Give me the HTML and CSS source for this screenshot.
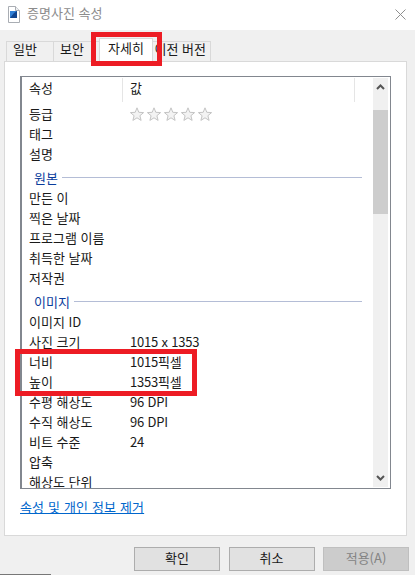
FILE: index.html
```html
<!DOCTYPE html>
<html lang="ko">
<head>
<meta charset="utf-8">
<title>증명사진 속성</title>
<link rel="stylesheet" href="styles.css">
</head>
<body>
<div class="window">
  <header class="titlebar">
    <svg class="file-icon" width="13" height="17" viewBox="0 0 13 17">
      <path d="M1.5 .5H8.5L12.5 4.5V16.5H1.5Z" fill="#fff" stroke="#a9adb3"/>
      <path d="M8.5 .5V4.5H12.5" fill="#eef0f2" stroke="#a9adb3"/>
      <rect x="3" y="5" width="7" height="7" fill="#2f7fd6"/>
      <path d="M3 12L7 7L10 5V12Z" fill="#10448f"/>
    </svg>
    <span class="title">증명사진 속성</span>
    <svg class="close" width="11" height="11" viewBox="0 0 11 11">
      <path d="M.5 .5L10.5 10.5M10.5 .5L.5 10.5" stroke="#8f8f8f" fill="none"/>
    </svg>
  </header>

  <main class="body">
    <nav class="tabs">
      <span class="tab tab-1">일반</span>
      <span class="tab tab-2">보안</span>
      <span class="tab tab-active">자세히</span>
      <span class="tab tab-4">이전 버전</span>
    </nav>

    <section class="panel">
      <div class="list">
        <div class="list-main">
          <div class="list-head">
            <span class="head-cell head-name">속성</span>
            <span class="head-cell head-value">값</span>
          </div>
          <div class="row">
            <span class="name">등급</span>
            <svg class="stars" width="83" height="15" viewBox="0 0 83 15">
              <defs>
                <polygon id="star" points="7,.8 8.8,5.3 13.6,5.6 9.9,8.7 11.1,13.4 7,10.8 2.9,13.4 4.1,8.7 .4,5.6 5.2,5.3" fill="#f3f3f3" stroke="#c4c4c4"/>
              </defs>
              <use href="#star" x="0"/>
              <use href="#star" x="17"/>
              <use href="#star" x="34"/>
              <use href="#star" x="51"/>
              <use href="#star" x="68"/>
            </svg>
          </div>
          <div class="row"><span class="name">태그</span></div>
          <div class="row"><span class="name">설명</span></div>
          <div class="group"><span class="group-label">원본</span><span class="group-line"></span></div>
          <div class="row"><span class="name">만든 이</span></div>
          <div class="row"><span class="name">찍은 날짜</span></div>
          <div class="row"><span class="name">프로그램 이름</span></div>
          <div class="row"><span class="name">취득한 날짜</span></div>
          <div class="row"><span class="name">저작권</span></div>
          <div class="group"><span class="group-label">이미지</span><span class="group-line"></span></div>
          <div class="row"><span class="name">이미지 ID</span></div>
          <div class="row"><span class="name">사진 크기</span><span class="value">1015 x 1353</span></div>
          <div class="row"><span class="name">너비</span><span class="value">1015픽셀</span></div>
          <div class="row"><span class="name">높이</span><span class="value">1353픽셀</span></div>
          <div class="row"><span class="name">수평 해상도</span><span class="value">96 DPI</span></div>
          <div class="row"><span class="name">수직 해상도</span><span class="value">96 DPI</span></div>
          <div class="row"><span class="name">비트 수준</span><span class="value">24</span></div>
          <div class="row"><span class="name">압축</span></div>
          <div class="row"><span class="name">해상도 단위</span></div>
        </div>
        <div class="scrollbar">
          <svg class="arrow" width="9" height="6" viewBox="0 0 9 6"><path d="M1 5L4.5 1.5L8 5" fill="none" stroke="#555" stroke-width="2"/></svg>
          <div class="track"><div class="thumb"></div></div>
          <svg class="arrow" width="9" height="6" viewBox="0 0 9 6"><path d="M1 1L4.5 4.5L8 1" fill="none" stroke="#555" stroke-width="2"/></svg>
        </div>
      </div>
      <a class="link" href="#">속성 및 개인 정보 제거</a>
    </section>

    <footer class="buttons">
      <button class="btn" type="button">확인</button>
      <button class="btn" type="button">취소</button>
      <button class="btn btn-disabled" type="button">적용(A)</button>
    </footer>
  </main>

  <div class="mark mark-tab"></div>
  <div class="mark mark-rows"></div>
  <div class="edge"></div>
</div>
</body>
</html>
```

FILE: styles.css
```css
* { box-sizing: border-box; }

html, body {
  margin: 0;
  padding: 0;
}

body {
  font-family: "Noto Sans CJK KR", "Noto Sans", sans-serif;
  font-size: 13px;
  color: #1a1a1a;
  background: #f0f0f0;
}

.window {
  position: relative;
  width: 415px;
  height: 575px;
  overflow: hidden;
  display: flex;
  flex-direction: column;
}

.titlebar {
  height: 30px;
  flex: none;
  background: #fff;
  display: flex;
  align-items: center;
  padding: 0 9px 2px 7px;
}

.file-icon { flex: none; }

.title {
  margin-left: 7px;
  margin-bottom: 2px;
  color: #8c8c8c;
  line-height: 24px;
}

.close { margin-left: auto; }

.body {
  flex: 1;
  display: flex;
  flex-direction: column;
  padding: 0 6px 0 4px;
  background: #f0f0f0;
}

.tabs {
  height: 31px;
  flex: none;
  display: flex;
  align-items: flex-end;
  padding-left: 2px;
}

.tab {
  height: 20px;
  line-height: 14px;
  border: 1px solid #d9d9d9;
  border-bottom: 0;
  border-left: 0;
  background: #f0f0f0;
  color: #1a1a1a;
}

.tab-1 { width: 48px; padding-left: 6px; border-left: 1px solid #d9d9d9; }
.tab-2 { width: 46px; padding-left: 6px; }
.tab-4 { width: 58px; text-align: right; padding-right: 4px; }

.tab-active {
  position: relative;
  width: 54px;
  height: 24px;
  margin-bottom: -1px;
  line-height: 18px;
  text-align: center;
  background: #fff;
  border-left: 1px solid #d9d9d9;
  margin-left: -1px;
  z-index: 1;
}

.panel {
  height: 475px;
  flex: none;
  margin-right: 2px;
  background: #fff;
  border: 1px solid #d9d9d9;
  padding: 14px 15px 0 15px;
}

.list {
  height: 413px;
  display: flex;
  border: 1px solid #82878f;
  border-left-width: 2px;
  background: #fff;
  padding-top: 1px;
}

.list-main {
  flex: 1;
  min-width: 0;
  overflow: hidden;
}

.list-head {
  height: 24px;
  display: flex;
  margin-bottom: 2px;
}

.head-cell {
  line-height: 20px;
  padding-left: 7px;
  border-right: 1px solid #e5e5e5;
}

.head-name { width: 101px; }
.head-value { width: 232px; }

.row {
  height: 20px;
  display: flex;
  align-items: center;
  line-height: 20px;
  white-space: nowrap;
}

.name {
  width: 100px;
  padding-left: 7px;
  flex: none;
}

.value {
  margin-left: 8px;
  letter-spacing: -0.2px;
}

.stars { margin-left: 8px; }

.group {
  height: 24px;
  display: flex;
  align-items: center;
  padding: 3px 11px 0 12px;
}

.group-label {
  color: #0a3c9c;
  line-height: 20px;
}

.group-line {
  flex: 1;
  height: 1px;
  margin-left: 4px;
  background: #b4bdd6;
}

.scrollbar {
  width: 15px;
  flex: none;
  margin-right: 2px;
  margin-bottom: 1px;
  background: #f0f0f0;
  display: flex;
  flex-direction: column;
  align-items: center;
}

.arrow {
  flex: none;
  margin: 6px 0;
}

.track {
  flex: 1;
  width: 100%;
  margin-top: 14px;
}

.thumb {
  width: 100%;
  height: 104px;
  background: #cdcdcd;
}

.link {
  display: inline-block;
  margin: 8px 0 0;
  color: #0066cc;
  line-height: 20px;
  letter-spacing: 0.15px;
  text-decoration: underline;
}

.buttons {
  flex: 1;
  display: flex;
  justify-content: flex-end;
  gap: 8.5px;
  padding-top: 11px;
}

.btn {
  width: 86px;
  height: 24px;
  padding: 0 0 2px;
  font: inherit;
  line-height: 20px;
  color: #1a1a1a;
  background: #e1e1e1;
  border: 1px solid #adadad;
}

.btn-disabled {
  color: #838383;
  background: #cccccc;
  border-color: #bfbfbf;
}

.mark {
  position: absolute;
  border: 5px solid #ed1c24;
  pointer-events: none;
  z-index: 2;
}

.mark-tab {
  left: 91px;
  top: 32px;
  width: 71px;
  height: 34px;
}

.mark-rows {
  left: 15px;
  top: 349px;
  width: 182px;
  height: 47px;
}

.edge {
  position: absolute;
  left: 0;
  bottom: 0;
  width: 51px;
  height: 1px;
  background: #777;
}
```
